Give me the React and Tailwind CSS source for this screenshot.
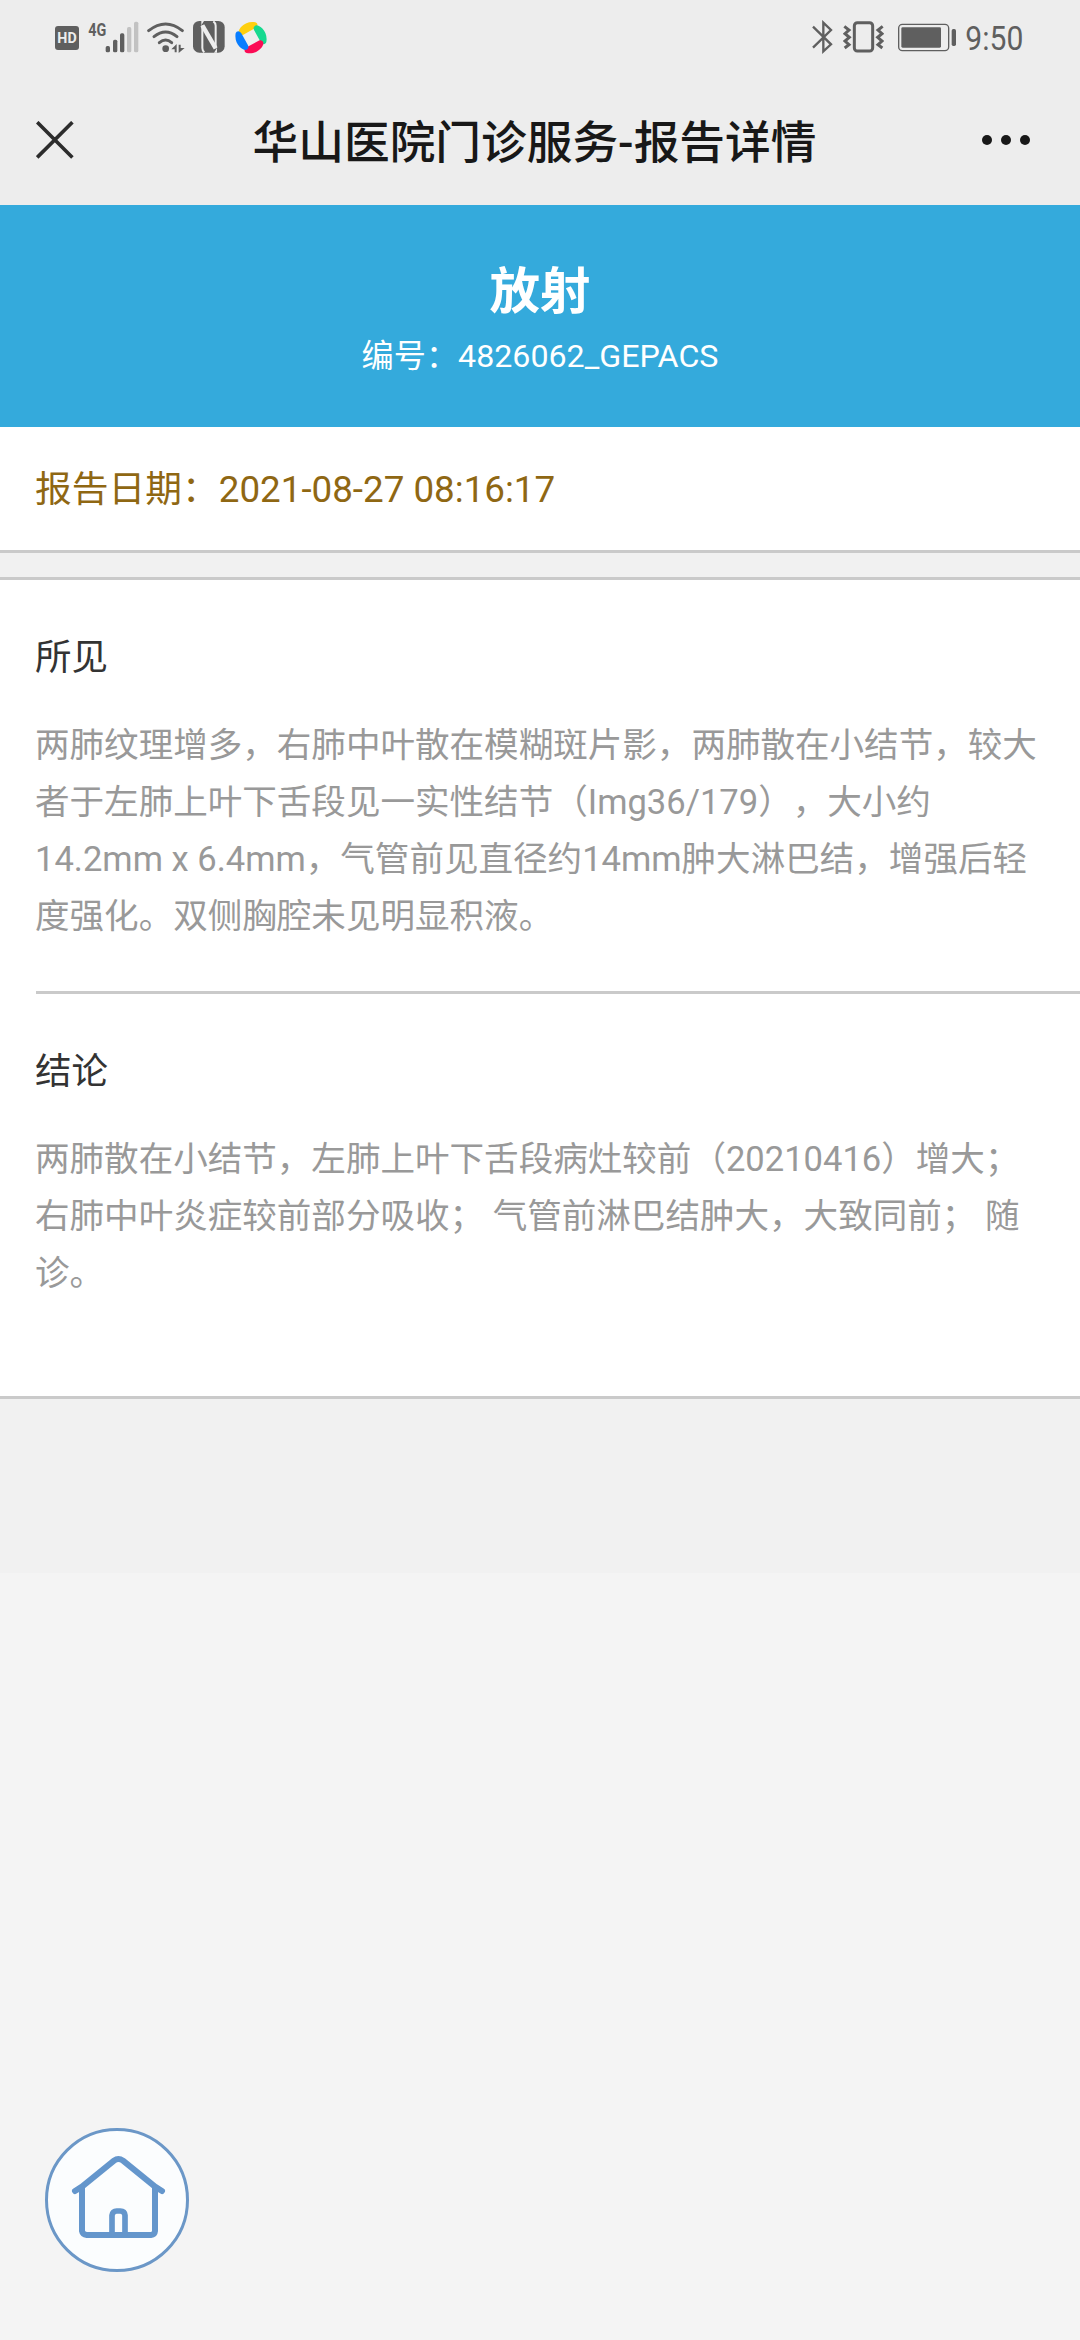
import React from 'react';

const report = {
  type: '放射',
  number: '4826062_GEPACS',
  date: '2021-08-27 08:16:17',
  sections: [
    {
      id: 'findings',
      title: '所见',
      text: '两肺纹理增多，右肺中叶散在模糊斑片影，两肺散在小结节，较大者于左肺上叶下舌段见一实性结节（Img36/179），大小约14.2mm x 6.4mm，气管前见直径约14mm肿大淋巴结，增强后轻度强化。双侧胸腔未见明显积液。',
    },
    {
      id: 'conclusion',
      title: '结论',
      text: '两肺散在小结节，左肺上叶下舌段病灶较前（20210416）增大； 右肺中叶炎症较前部分吸收； 气管前淋巴结肿大，大致同前； 随诊。',
    },
  ],
};

// One blade of the assistant icon, repeated every 90 degrees
const bladePath = 'M596 97C594 90 612 61 646 67C655 70 654 79 646 84L610 104C603 107 597 104 596 97Z';

function StatusBar() {
  return (
    <div className="flex h-[75px] items-start justify-between pt-5 pr-[56px] pl-[55px] text-[#5f5f5f]">
      <div className="flex">
        {/* HD */}
        <svg className="h-[35px] w-6 overflow-visible" viewBox="45 60 72 105" fill="currentColor">
          <rect x="45" y="78" width="72" height="72" rx="9" />
          <text x="52" y="129" fontSize="42" fontWeight="700" fill="#ededed" textLength="58" lengthAdjust="spacingAndGlyphs">HD</text>
        </svg>
        {/* Signal */}
        <svg className="ml-[9px] h-[35px] w-[51px] overflow-visible" viewBox="144 60 153 105" fill="currentColor">
          <text x="145" y="107" fontSize="57" fontWeight="700" textLength="54" lengthAdjust="spacingAndGlyphs">4G</text>
          <rect x="197" y="138" width="13" height="19" rx="5" />
          <rect x="219" y="119" width="13" height="38" rx="5" />
          <rect x="240" y="100" width="13" height="57" rx="5" />
          <rect x="261" y="81" width="13" height="76" rx="5" fill="#c2c2c2" />
          <rect x="282" y="65" width="13" height="92" rx="5" fill="#c2c2c2" />
        </svg>
        {/* Wifi */}
        <svg className="ml-2 h-[35px] w-[38px]" viewBox="321 60 114 105" fill="none" stroke="currentColor" strokeWidth="9" strokeLinecap="round">
          <path d="M326 92Q377 52 427 92" />
          <path d="M342 110Q377 82 411 110" />
          <path d="M358 128Q377 112 395 128" />
          <circle cx="377" cy="146" r="10" fill="currentColor" stroke="none" />
          <path d="M394 148L410 132V157H404V148ZM416 134H422V144H434L416 159Z" fill="currentColor" stroke="none" />
        </svg>
        {/* NFC */}
        <svg className="ml-2 h-[35px] w-8" viewBox="459 60 96 105">
          <rect x="459" y="63" width="95" height="95" rx="19" fill="currentColor" />
          <g fill="none" stroke="#ededed">
            <path d="M493 157Q487 152 487 144V76" strokeWidth="6" />
            <path d="M520 64Q527 69 527 77V145" strokeWidth="6" />
            <path d="M487 76L527 145" strokeWidth="13" />
          </g>
          <path d="M484 63H492L484 76ZM522 158L531 144V158Z" fill="#ededed" />
        </svg>
        {/* Assistant app */}
        <svg className="ml-[10px] h-[35px] w-8" viewBox="585 60 96 105">
          <path d={bladePath} fill="#fecf0e" />
          <path d={bladePath} fill="#16d98f" transform="rotate(90 633 113)" />
          <path d={bladePath} fill="#fb0b54" transform="rotate(180 633 113)" />
          <path d={bladePath} fill="#087dff" transform="rotate(270 633 113)" />
        </svg>
      </div>

      <div className="flex">
        {/* Bluetooth */}
        <svg className="h-[35px] w-[21px]" viewBox="66 60 63 105" fill="none" stroke="currentColor" strokeWidth="7">
          <path d="M69 80L123 133L100 154V68L123 90L69 143" />
        </svg>
        {/* Vibrate */}
        <svg className="ml-[10px] h-[35px] w-[41px]" viewBox="159 60 123 105" fill="none" stroke="currentColor" strokeWidth="9">
          <rect x="193" y="68" width="55" height="85" rx="9" />
          <path d="M163 79L177 90L165 101L178 112L165 123L177 134L164 144" />
          <path d="M278 79L264 90L276 101L263 112L276 123L264 134L277 144" />
        </svg>
        {/* Battery */}
        <svg className="ml-[14px] h-[35px] w-[58px]" viewBox="324 60 174 105" fill="currentColor">
          <rect x="326" y="73" width="150" height="79" rx="11" fill="none" stroke="currentColor" strokeWidth="4" />
          <rect x="334" y="82" width="119" height="61" rx="4" />
          <rect x="485" y="87" width="13" height="51" rx="5" />
        </svg>
        {/* Clock */}
        <svg className="ml-[10px] h-[35px] w-[58px] overflow-visible" viewBox="528 60 174 105" fill="currentColor">
          <text x="526" y="149" fontSize="101" textLength="174" lengthAdjust="spacingAndGlyphs">9:50</text>
        </svg>
      </div>
    </div>
  );
}

function NavBar() {
  return (
    <div className="flex h-[130px] items-center justify-between pt-[2px] pr-[50px] pl-[36px] text-[#181818]">
      <svg className="mb-[2px] h-[38px] w-[38px]" viewBox="0 0 38 38" fill="none" stroke="#2c2c2c" strokeWidth="3.6">
        <path d="M1.2 1.2L36.4 36.4M36.4 1.2L1.2 36.4" />
      </svg>
      <h1 className="mt-[5px] ml-[13px] text-[45.7px] leading-[60px] font-medium">华山医院门诊服务-报告详情</h1>
      <div className="mb-[2px] flex gap-[9px]">
        <span className="h-[10px] w-[10px] rounded-full bg-[#181818]" />
        <span className="h-[10px] w-[10px] rounded-full bg-[#181818]" />
        <span className="h-[10px] w-[10px] rounded-full bg-[#181818]" />
      </div>
    </div>
  );
}

function Section({ title, text }) {
  return (
    <div className="-ml-px pr-9">
      <h3 className="text-[36.5px] leading-[54px] text-[#333333]">{title}</h3>
      <p className="mt-[32px] text-[34.56px] leading-[57px] text-[#999999]">{text}</p>
    </div>
  );
}

export default function App() {
  const [findings, conclusion] = report.sections;

  return (
    <div
      lang="zh-CN"
      className="relative flex h-[2340px] w-[1080px] flex-col overflow-hidden bg-[#f4f4f4] font-['Roboto','Noto_Sans_CJK_SC',sans-serif] [text-spacing-trim:space-all]"
    >
      <header className="bg-[#ededed]">
        <StatusBar />
        <NavBar />
      </header>

      {/* Report type */}
      <div className="flex h-[222px] flex-col items-center bg-[#34aadc] pt-[51px] text-white">
        <h2 className="text-[50.5px] leading-[72px] font-bold">{report.type}</h2>
        <p className="mt-[4px] text-[32.2px] leading-[48px]">编号：{report.number}</p>
      </div>

      {/* Date */}
      <div className="h-[126px] border-b-[3px] border-[#cacaca] bg-white pt-[36px] pr-9 pl-[35px]">
        <p className="text-[36.75px] leading-[54px] text-[#8f6713]">报告日期：{report.date}</p>
      </div>

      <div className="h-6 bg-[#f1f1f1]" />

      {/* Report body */}
      <div className="h-[822px] border-y-[3px] border-[#cacaca] bg-white pl-9">
        <div className="h-[414px] border-b-[3px] border-[#cacaca] pt-[51px]">
          <Section title={findings.title} text={findings.text} />
        </div>
        <div className="pt-[51px]">
          <Section title={conclusion.title} text={conclusion.text} />
        </div>
      </div>

      <div className="h-[174px] bg-[#f1f1f1]" />

      {/* Floating home button */}
      <button className="absolute top-[2128px] left-[45px] h-36 w-36" aria-label="首页">
        <svg className="h-36 w-36" viewBox="45 54 432 432" fill="none" stroke="#6496cc" strokeLinejoin="round" strokeLinecap="round">
          <circle cx="261" cy="270" r="211.5" fill="#fbfdfe" stroke="#6b97c7" strokeWidth="9" />
          <path d="M135 243L156 230L252 152Q265 142 279 152L375 230L396 243" strokeWidth="18" />
          <path d="M156 234V363Q158 374 170 375H363Q374 374 375 363V234" strokeWidth="18" />
          <path d="M246 371V316Q248 303 260 303H271Q284 303 285 316V371" strokeWidth="17" />
        </svg>
      </button>
    </div>
  );
}
